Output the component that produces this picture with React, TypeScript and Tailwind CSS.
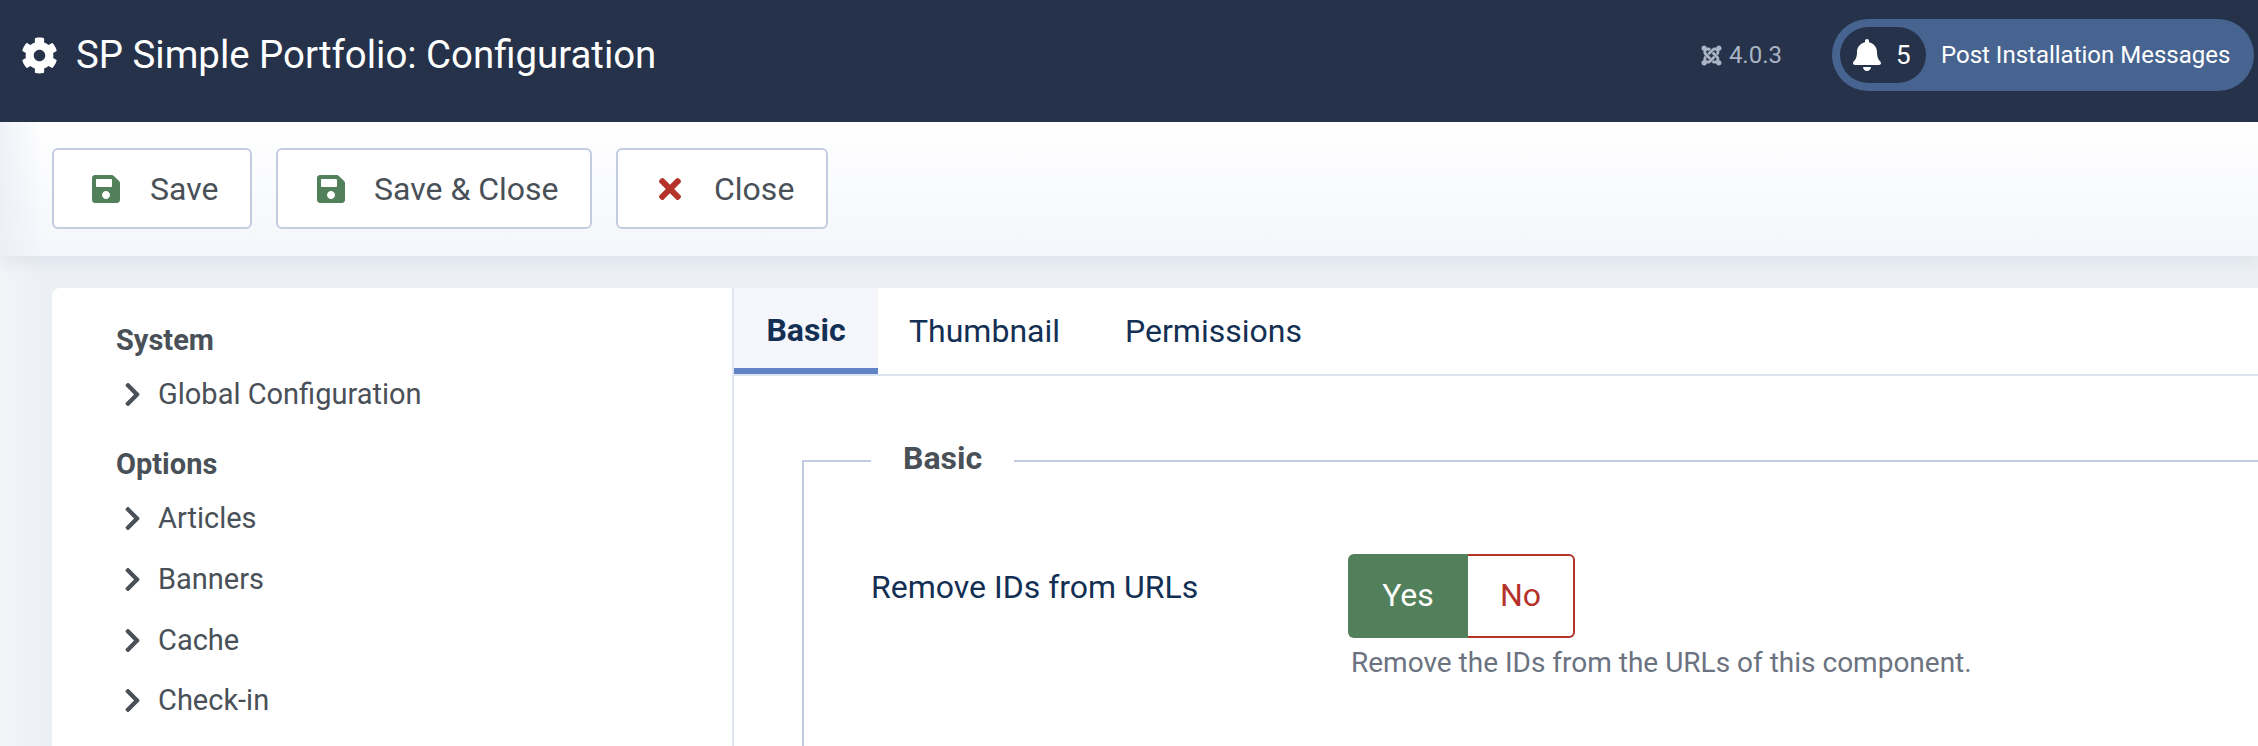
import type { ReactNode } from "react";
import { FaCog, FaSave, FaTimes, FaBell, FaJoomla, FaChevronRight } from "react-icons/fa";

const sideGroups = [
  { title: "System", items: ["Global Configuration"], cls: "", ul: "mt-[8px]" },
  { title: "Options", items: ["Articles", "Banners", "Cache", "Check-in"], cls: "mt-[23px]", ul: "mt-[9px]" },
];

function ToolButton({ label, icon, cls }: { label: string; icon: ReactNode; cls: string }) {
  return (
    <button className={`flex h-[81px] items-center rounded-[6px] border-2 border-[#c3cde0] bg-white text-[32px] text-[#495057] ${cls}`}>
      {icon}
      <span>{label}</span>
    </button>
  );
}

export default function App() {
  return (
    <div className="flex h-[746px] w-[2258px] flex-col overflow-hidden bg-[linear-gradient(to_right,#f2f4f8,#ecf0f5_44px)] font-['Roboto',sans-serif]">
      <header className="flex h-[122px] shrink-0 items-center bg-[#25324a] pb-[12px] pl-[21px] pr-[4px] text-white">
        <FaCog className="h-[37px] w-[37px]" />
        <h1 className="ml-[18px] text-[38.4px] font-normal leading-none">SP Simple Portfolio: Configuration</h1>
        <div className="ml-auto flex items-center gap-[6px] text-[24px] text-[#a9b4c4]">
          <FaJoomla className="h-[23px] w-[23px]" />
          <span>4.0.3</span>
        </div>
        <div className="ml-[50px] flex h-[72px] w-[422px] items-center rounded-full bg-[#476490] pl-[8px]">
          <div className="flex h-[56px] w-[86px] items-center rounded-full bg-[#25324a] pl-[13px]">
            <FaBell className="h-[32px] w-[28px]" />
            <span className="ml-[15px] text-[26px] font-normal">5</span>
          </div>
          <span className="ml-[15px] text-[24px] font-normal">Post Installation Messages</span>
        </div>
      </header>

      <div className="flex h-[134px] shrink-0 items-start gap-[24px] bg-[linear-gradient(to_right,rgba(232,236,244,0.7),rgba(255,255,255,0)_44px),linear-gradient(to_bottom,#ffffff,#f4f6fb)] pl-[52px] pt-[26px] shadow-[0_6px_14px_rgba(120,135,165,0.12)]">
        <ToolButton label="Save" cls="w-[200px] gap-[30px] pl-[38px]" icon={<FaSave className="h-[32px] w-[28px] text-[#52805a]" />} />
        <ToolButton label="Save & Close" cls="w-[316px] gap-[29px] pl-[39px]" icon={<FaSave className="h-[32px] w-[28px] text-[#52805a]" />} />
        <ToolButton label="Close" cls="w-[212px] gap-[33px] pl-[41px]" icon={<FaTimes className="h-[32px] w-[22px] text-[#b5322b]" />} />
      </div>

      <main className="ml-[52px] mt-[32px] flex min-h-0 flex-1 overflow-hidden rounded-tl-[8px] bg-white">
        <aside className="w-[682px] shrink-0 border-r-2 border-[#dfe5f0] pl-[64px] pt-[36px] text-[#495057]">
          {sideGroups.map((g) => (
            <div key={g.title} className={g.cls}>
              <div className="h-[32px] text-[29px] font-bold leading-[32px]">{g.title}</div>
              <ul className={g.ul}>
                {g.items.map((it) => (
                  <li key={it} className="flex h-[60.6px] items-center text-[29px] leading-none">
                    <FaChevronRight className="ml-[8px] h-[27px] w-[17px]" />
                    <span className="ml-[17px]">{it}</span>
                  </li>
                ))}
              </ul>
            </div>
          ))}
        </aside>

        <section className="min-w-0 flex-1">
          <div className="flex h-[88px] border-b-2 border-[#dfe5f0] text-[32px] text-[#132f53]">
            <div className="flex h-[86px] w-[144px] items-center justify-center border-b-[6px] border-[#5f83c4] bg-[#f4f6fb] pt-[3px] font-bold">Basic</div>
            <div className="flex h-[86px] items-center pl-[31px]">Thumbnail</div>
            <div className="flex h-[86px] items-center pl-[65px]">Permissions</div>
          </div>

          <fieldset className="ml-[68px] mt-[64px] h-[400px] border-l-2 border-t-2 border-[#bfcbe0] pl-[67px]">
            <legend className="px-[32px] pb-[6px] text-[32px] font-bold leading-[36px] text-[#495057]">Basic</legend>
            <div className="mt-[72px] flex items-start">
              <label className="mt-[15px] w-[477px] text-[32px] leading-[36px] text-[#132f53]">Remove IDs from URLs</label>
              <div>
                <div className="flex h-[84px] w-[227px] text-[32px]">
                  <div className="flex w-[120px] items-center justify-center rounded-l-[6px] bg-[#52805a] pb-[2px] text-white">Yes</div>
                  <div className="flex flex-1 items-center justify-center rounded-r-[6px] border-2 border-l-0 border-[#b5322b] pb-[2px] text-[#b5322b]">No</div>
                </div>
                <p className="ml-[3px] mt-[8px] text-[28px] leading-[34px] text-[#6b7280]">Remove the IDs from the URLs of this component.</p>
              </div>
            </div>
          </fieldset>
        </section>
      </main>
    </div>
  );
}
